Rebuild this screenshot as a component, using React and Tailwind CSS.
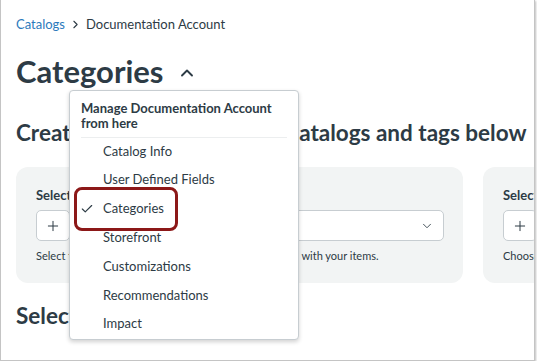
import { Check, ChevronDown, ChevronRight, ChevronUp, Plus } from 'lucide-react';

const menuItems = [
  'Catalog Info',
  'User Defined Fields',
  'Categories',
  'Storefront',
  'Customizations',
  'Recommendations',
  'Impact',
];

function Card({ label, help, withSelect, className = '' }) {
  return (
    <div className={`shrink-0 rounded-[12px] bg-[#f2f4f4] pl-5 pt-[20px] pb-[20px] ${className}`}>
      <div className="text-[13px] font-bold leading-[16px] text-[#2d3b45] whitespace-nowrap">{label}</div>
      <div className="mt-[7px] flex h-[31px] gap-2 pr-[19px]">
        <div className="flex w-[34px] shrink-0 items-center justify-center rounded-[5px] border border-[#c7cdd1] bg-white">
          <Plus className="h-4 w-4 text-[#2d3b45]" strokeWidth={1.5} />
        </div>
        {withSelect && (
          <div className="flex flex-1 items-center justify-end rounded-[5px] border border-[#c7cdd1] bg-white pr-[9px]">
            <ChevronDown className="h-[14px] w-[14px] text-[#2d3b45]" strokeWidth={1.5} />
          </div>
        )}
      </div>
      <div className="mt-[8px] text-[11px] leading-[14px] text-[#2d3b45] whitespace-nowrap">{help}</div>
    </div>
  );
}

export default function App() {
  return (
    <div className="bg-white" style={{ fontFamily: 'Lato, "Open Sans", sans-serif' }}>
      <div className="relative h-[361px] w-[535px] overflow-hidden border-x border-b border-[#c4c4c4] bg-white px-[15px] shadow-[1px_1px_2px_rgba(0,0,0,0.25)]">
        {/* breadcrumb */}
        <div className="flex items-center pt-[16px] text-[13px] leading-[16px]">
          <span className="text-[#2b7abc]">Catalogs</span>
          <ChevronRight className="mx-[4px] h-[13px] w-[13px] text-[#2d3b45]" strokeWidth={2} />
          <span className="text-[#2d3b45]">Documentation Account</span>
        </div>

        {/* title */}
        <div className="mt-[24px] flex items-center gap-[13px]">
          <h1 className="text-[31px] font-bold leading-[30px] text-[#2d3b45]">Categories</h1>
          <ChevronUp className="mt-[4px] h-[20px] w-[20px] text-[#2d3b45]" strokeWidth={2.25} />
        </div>

        <h2 className="mt-[36px] whitespace-nowrap text-[22.5px] font-bold leading-[22px] text-[#2d3b45]">
          Create categories from the catalogs and tags below
        </h2>

        {/* cards */}
        <div className="mt-[23px] flex gap-5">
          <Card
            className="w-[447px]"
            label="Select catalogs"
            help="Select the catalogs and tags that you want to associate with your items."
            withSelect
          />
          <Card className="w-[300px]" label="Select tags" help="Choose tags" />
        </div>

        <h2 className="mt-[22px] whitespace-nowrap text-[22.5px] font-bold leading-[22px] text-[#2d3b45]">
          Select existing categories
        </h2>

        {/* dropdown menu */}
        <div className="absolute left-[68px] top-[90px] w-[230px] rounded-[4px] border border-[#c7cdd1] bg-white shadow-[0_2px_4px_rgba(0,0,0,0.18)]">
          <div className="mx-[11px] border-b border-[#eceeef] pt-[10px] pb-[6px] text-[13px] font-bold leading-[15px] text-[#2d3b45]">
            Manage Documentation Account from here
          </div>
          <ul className="-mt-[1px]">
            {menuItems.map((item) => (
              <li key={item} className="flex h-[28.8px] items-center text-[13px] text-[#2d3b45]">
                <span className="flex w-[33px] justify-end pr-[9px]">
                  {item === 'Categories' && <Check className="h-[14px] w-[14px]" strokeWidth={2} />}
                </span>
                {item}
              </li>
            ))}
          </ul>
        </div>

        {/* highlight */}
        <div className="absolute left-[73px] top-[187px] h-[44px] w-[104px] rounded-[8px] border-[3px] border-[#8c1818]" />
      </div>
    </div>
  );
}
